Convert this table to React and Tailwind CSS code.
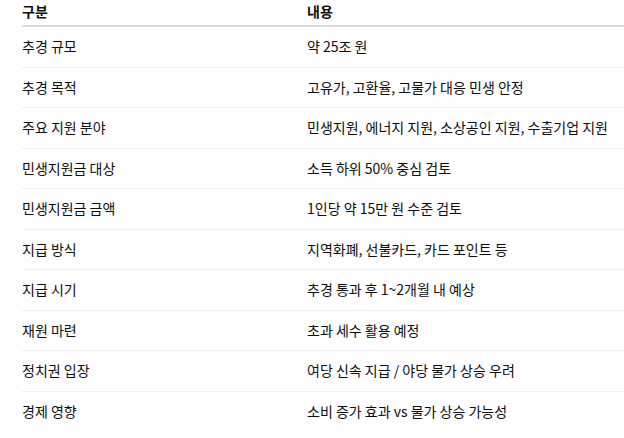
const rows = [
  ["추경 규모", "약 25조 원"],
  ["추경 목적", "고유가, 고환율, 고물가 대응 민생 안정"],
  ["주요 지원 분야", "민생지원, 에너지 지원, 소상공인 지원, 수출기업 지원"],
  ["민생지원금 대상", "소득 하위 50% 중심 검토"],
  ["민생지원금 금액", "1인당 약 15만 원 수준 검토"],
  ["지급 방식", "지역화폐, 선불카드, 카드 포인트 등"],
  ["지급 시기", "추경 통과 후 1~2개월 내 예상"],
  ["재원 마련", "초과 세수 활용 예정"],
  ["정치권 입장", "여당 신속 지급 / 야당 물가 상승 우려"],
  ["경제 영향", "소비 증가 효과 vs 물가 상승 가능성"],
];

export default function App() {
  return (
    <div className="w-[624px] h-[438px] overflow-hidden bg-white pl-[22px] font-['Noto_Sans_CJK_KR','Noto_Sans',sans-serif] text-[14px] text-[#0d0d0d]">
      <div className="w-[640px]">
        <div className="grid grid-cols-[285px_1fr] h-[27px] items-start border-b-2 border-[#dcdcdc] font-bold leading-[22px]">
          <div>구분</div>
          <div>내용</div>
        </div>
        {rows.map(([k, v], i) => (
          <div
            key={k}
            className={
              i < rows.length - 1
                ? "grid grid-cols-[285px_1fr] h-[40.5px] items-center border-b border-[#efefef]"
                : "grid grid-cols-[285px_1fr] h-[40.5px] items-center"
            }
          >
            <div>{k}</div>
            <div>{v}</div>
          </div>
        ))}
      </div>
    </div>
  );
}
